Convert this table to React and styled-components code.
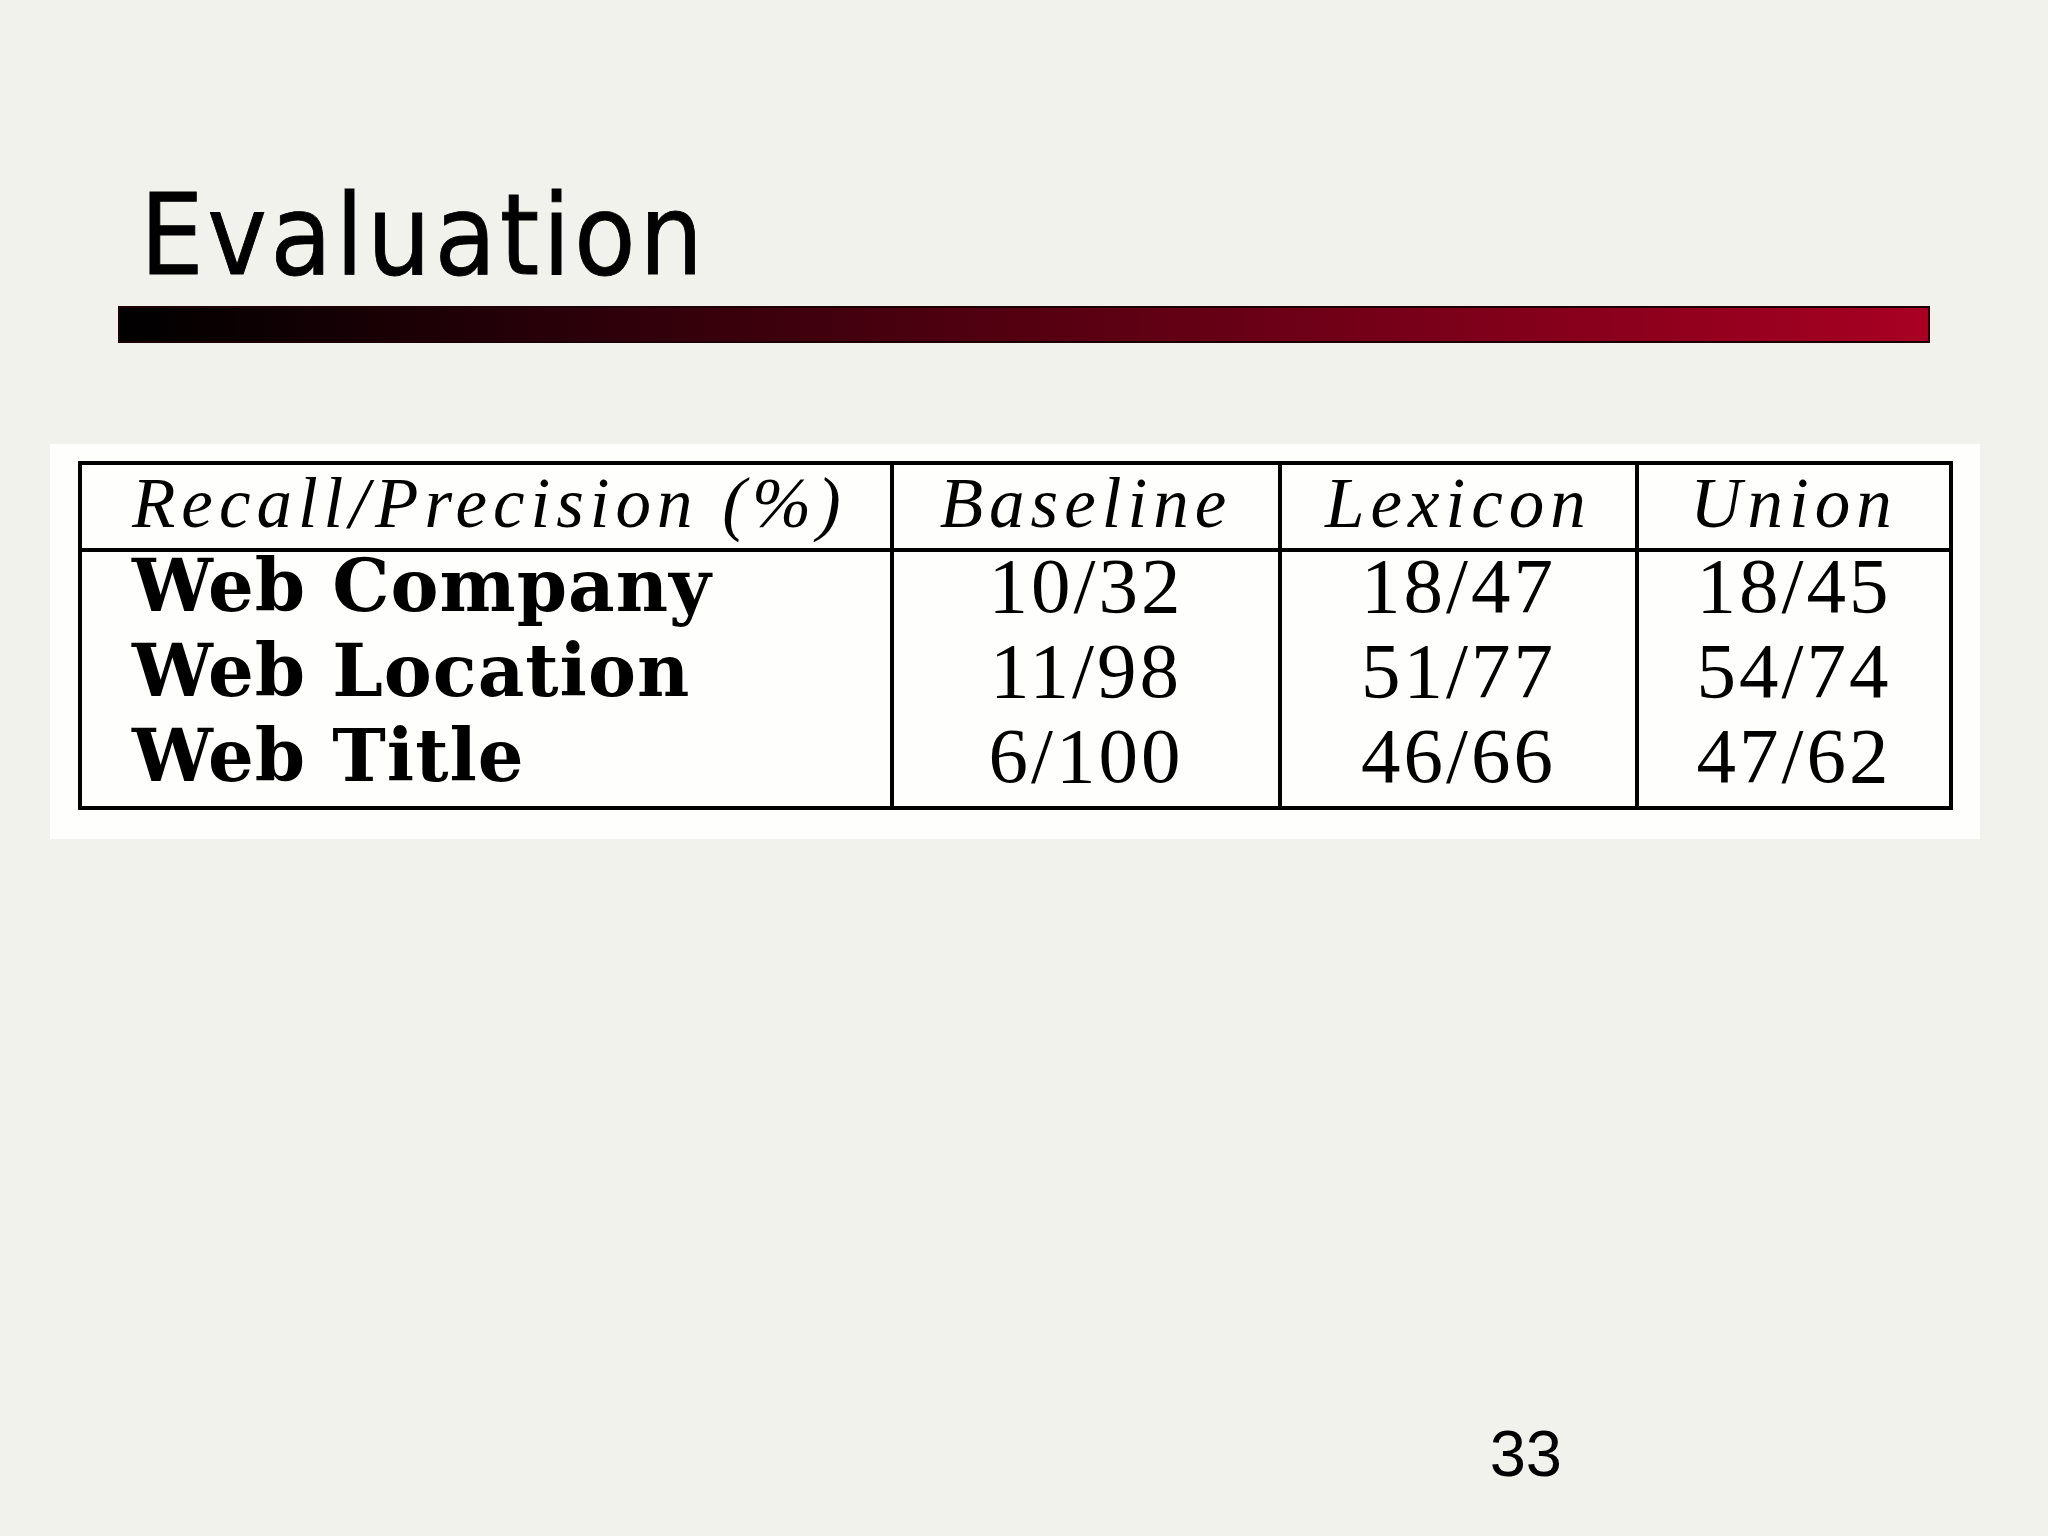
import React from "react";
import styled, { createGlobalStyle } from "styled-components";

const GlobalStyle = createGlobalStyle`
  html, body {
    margin: 0;
    padding: 0;
    background: #f2f2ec;
  }
`;

const COLUMNS = [
  { label: "Recall/Precision (%)", width: 808 },
  { label: "Baseline", width: 388 },
  { label: "Lexicon", width: 357 },
  { label: "Union", width: 314 },
];

const ROWS = [
  { name: "Web Company", values: ["10/32", "18/47", "18/45"] },
  { name: "Web Location", values: ["11/98", "51/77", "54/74"] },
  { name: "Web Title", values: ["6/100", "46/66", "47/62"] },
];

const App = () => {
  return (
    <Slide>
      <GlobalStyle />
      <Title>Evaluation</Title>
      <Rule />
      <Figure>
        <Table>
          <colgroup>
            {COLUMNS.map((col) => (
              <col key={col.label} style={{ width: col.width }} />
            ))}
          </colgroup>
          <thead>
            <tr>
              {COLUMNS.map((col, i) => (
                <HeadCell key={col.label} $first={i === 0}>
                  {col.label}
                </HeadCell>
              ))}
            </tr>
          </thead>
          <tbody>
            {ROWS.map((row, r) => (
              <tr key={row.name}>
                <NameCell $last={r === ROWS.length - 1}>{row.name}</NameCell>
                {row.values.map((v, i) => (
                  <ValueCell key={i} $last={r === ROWS.length - 1}>
                    {v}
                  </ValueCell>
                ))}
              </tr>
            ))}
          </tbody>
        </Table>
      </Figure>
      <Footer>
        <PageNumber>33</PageNumber>
      </Footer>
    </Slide>
  );
};

const Slide = styled.div`
  width: 2048px;
  height: 1536px;
  box-sizing: border-box;
  display: flex;
  flex-direction: column;
  padding: 179px 0 51px;
  background: #f2f2ec;
  overflow: hidden;
`;

const Title = styled.h1`
  margin: 0 0 0 140px;
  font-family: "DejaVu Sans Condensed", "DejaVu Sans", sans-serif;
  font-stretch: condensed;
  font-weight: normal;
  font-size: 112px;
  line-height: 112px;
  letter-spacing: 3.5px;
  color: #000;
  -webkit-text-stroke: 0.8px #000;
`;

const Rule = styled.div`
  margin: 15px 0 0 118px;
  width: 1812px;
  height: 37px;
  box-sizing: border-box;
  border: 2px solid #1c0006;
  background: linear-gradient(to right, #000000 0%, #a80022 100%);
`;

const Figure = styled.div`
  margin: 101px 0 0 50px;
  width: 1930px;
  height: 395px;
  box-sizing: border-box;
  padding: 17px 0 0 28px;
  background: #fefefd;
`;

const Table = styled.table`
  width: 1875px;
  table-layout: fixed;
  border-collapse: separate;
  border-spacing: 0;
  border: 4px solid #000;
  color: #000;
`;

const Cell = styled.td`
  box-sizing: border-box;
  padding: 0;
  text-align: center;
  white-space: nowrap;
  font-family: "Liberation Serif", "Times New Roman", serif;
  & + & {
    border-left: 4px solid #000;
  }
`;

const HeadCell = styled(Cell).attrs({ as: "th" })`
  font-style: italic;
  font-weight: normal;
  font-size: 71px;
  letter-spacing: 6px;
  line-height: 76px;
  padding: 0 0 7px;
  border-bottom: 4px solid #000;
  text-align: ${(p) => (p.$first ? "left" : "center")};
  padding-left: ${(p) => (p.$first ? "50px" : "0")};
`;

const NameCell = styled(Cell)`
  text-align: left;
  padding: 0 0 ${(p) => (p.$last ? "17px" : "18px")} 50px;
  font-family: "DejaVu Serif", "Liberation Serif", serif;
  font-weight: bold;
  font-size: 72px;
  letter-spacing: 1px;
  line-height: 67px;
`;

const ValueCell = styled(Cell)`
  padding: 0 0 ${(p) => (p.$last ? "17px" : "18px")};
  font-size: 79px;
  letter-spacing: 3px;
  line-height: 67px;
  border-left: 4px solid #000;
`;

const Footer = styled.div`
  margin-top: auto;
  display: flex;
  justify-content: flex-end;
  padding-right: 486px;
`;

const PageNumber = styled.span`
  font-family: "Liberation Sans", Arial, sans-serif;
  font-size: 65px;
  line-height: 63px;
  color: #000;
`;

export default App;
